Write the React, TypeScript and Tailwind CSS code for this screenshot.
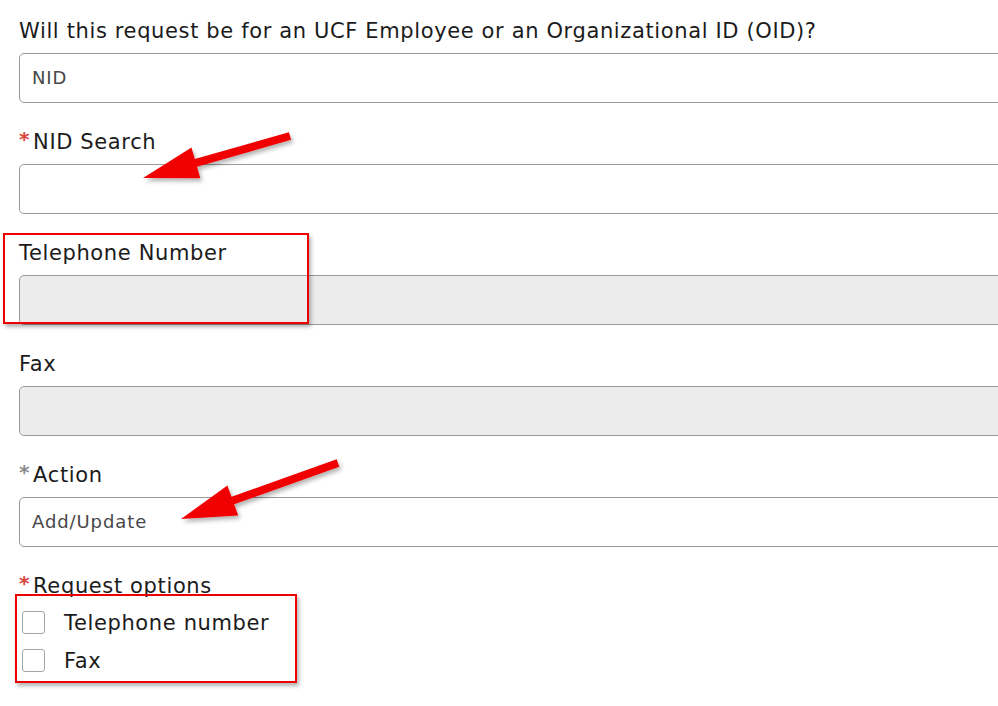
const Star = ({ tone }: { tone: "red" | "gray" }) => (
	<span className={`mr-[3px] text-[20px] font-bold leading-none -translate-y-[3px] ${tone === "red" ? "text-[#d9443b]" : "text-[#8a8a8a]"}`}>*</span>
);

const Field = ({ label, star, value, disabled }: { label: string; star?: "red" | "gray"; value?: string; disabled?: boolean }) => (
	<div className="flex flex-col pb-[26px]">
		<label className="flex items-center h-[24px] pt-[2px] text-[21px] leading-[24px] tracking-[0.03em] text-[#1b1b1b]">
			{star && <Star tone={star} />}
			{label}
		</label>
		<div
			className={`mt-[11px] h-[50px] w-[1000px] rounded-[5px] border border-[#9a9a9a] flex items-center px-3 pb-[1px] text-[18px] tracking-[0.05em] text-[#474747] ${disabled ? "bg-[#ececec]" : "bg-white"}`}
		>
			{value}
		</div>
	</div>
);

const Check = ({ label }: { label: string }) => (
	<div className="flex items-center h-[38px]">
		<span className="ml-[3px] w-[23px] h-[23px] rounded-[3px] border border-[#a5a5a5] bg-white"></span>
		<span className="ml-[19px] pt-[3px] text-[21px] tracking-[0.03em] text-[#1b1b1b]">{label}</span>
	</div>
);

export default function App() {
	return (
		<div className="relative w-[998px] h-[706px] overflow-hidden bg-white font-['DejaVu_Sans',sans-serif]">
			<div className="pl-[19px] pt-[18px]">
				<Field label="Will this request be for an UCF Employee or an Organizational ID (OID)?" value="NID" />
				<Field label="NID Search" star="red" />
				<Field label="Telephone Number" disabled />
				<Field label="Fax" disabled />
				<Field label="Action" star="gray" value="Add/Update" />
				<label className="flex items-center h-[24px] pt-[2px] text-[21px] leading-[24px] tracking-[0.03em] text-[#1b1b1b]">
					<Star tone="red" />
					Request options
				</label>
				<div className="mt-[6px] flex flex-col">
					<Check label="Telephone number" />
					<Check label="Fax" />
				</div>
			</div>

			<div className="absolute left-[3px] top-[233px] w-[306px] h-[91px] border-2 border-[#ee0000] shadow-[2px_3px_4px_rgba(0,0,0,0.3)]"></div>
			<div className="absolute left-[15px] top-[594px] w-[282px] h-[89px] border-2 border-[#ee0000] shadow-[2px_3px_4px_rgba(0,0,0,0.3)]"></div>

			<svg className="absolute inset-0 pointer-events-none" width="998" height="706">
				<defs>
					<filter id="sh" x="-20%" y="-20%" width="140%" height="160%">
						<feDropShadow dx="2" dy="3" stdDeviation="2" floodColor="#000" floodOpacity="0.3" />
					</filter>
				</defs>
				<g fill="#f00000" filter="url(#sh)">
					<polygon points="291.1,139.8 288.9,132.2 194.8,159.1 191.5,147.5 143,178 200.3,178.3 197,166.7" />
					<polygon points="339.3,466.8 336.7,459.2 231.5,496.7 227.4,485.4 181,519 238.2,515.6 234.1,504.3" />
				</g>
			</svg>
		</div>
	);
}
